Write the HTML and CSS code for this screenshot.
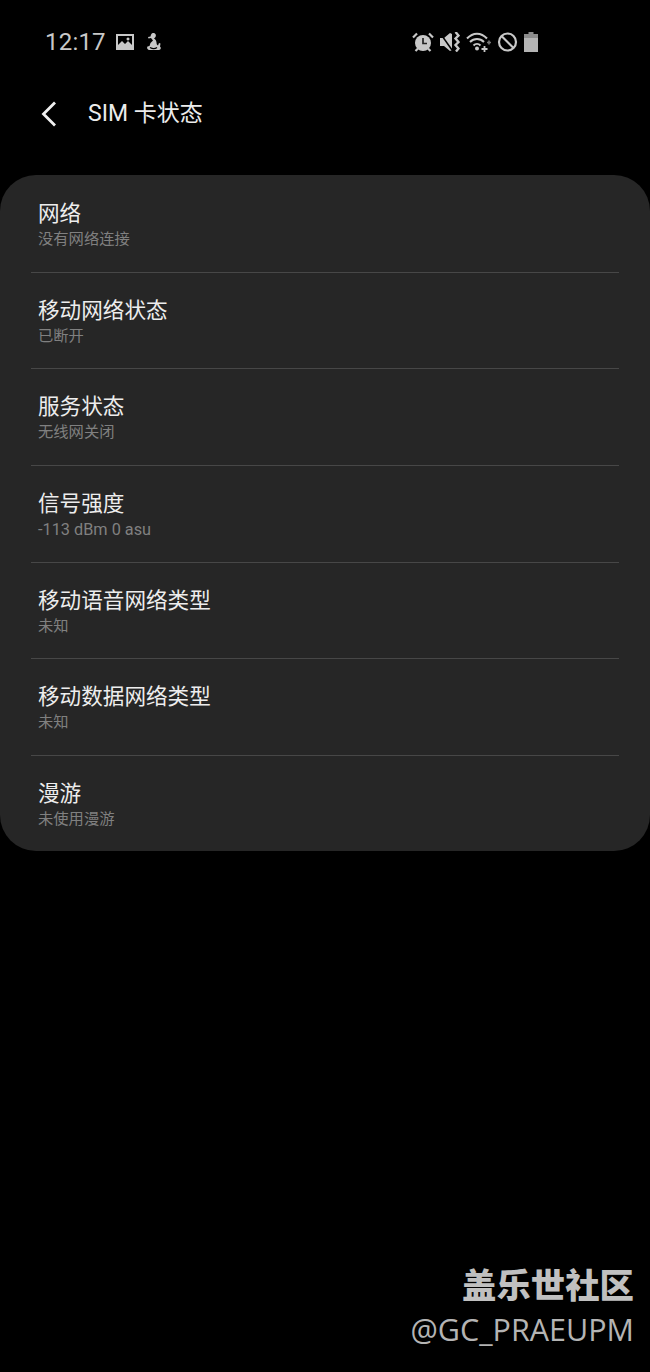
FILE: index.html
```html
<!DOCTYPE html>
<html lang="zh">
<head>
<meta charset="utf-8">
<title>SIM 卡状态</title>
<link rel="stylesheet" href="styles.css">
</head>
<body>
<div class="status">
  <div class="status-left">
    <span class="time">12:17</span>
    <svg class="ic-img" width="20" height="18" viewBox="0 0 20 18"><path fill="#c8c8c8" fill-rule="evenodd" d="M1 1h18v16H1zM3 3v9l4-4 3 3 3-3 4 4V3zM13 4.500a1.500 1.500 0 1 0 .01 0z"/></svg>
    <svg class="ic-s" width="18" height="20" viewBox="0 0 18 20"><path fill="#c8c8c8" d="M8 1c2.500 0 3.500 2 2.500 4L9 6.500c1.500 1 2.500 2.500 2.500 4 0 1.500.5 2.500 1.500 3l1-2.500 1.500.5-.5 3c1.500 1 1 3-1 3.500H5c-2.500 0-3.500-2-2.500-3.500l2-.5 1-3L8 8.500 6 6l-2.500.5L3 5l2.500-.5C6 2.500 6.500 1 8 1z"/><path d="M5 15.500c2.500 1.500 5 1.500 7 0" fill="none" stroke="#000" stroke-width="1.300"/></svg>
  </div>
  <div class="status-right">
    <svg width="22" height="20" viewBox="0 0 22 20"><circle cx="11" cy="11" r="8" fill="#c8c8c8"/><path d="M11 6v5.500h4" fill="none" stroke="#222" stroke-width="1.700"/><path d="M1 5.500 5 1.500M21 5.500 17 1.500M3.500 19l2.500-2.500M18.500 19 16 16.500" stroke="#c8c8c8" stroke-width="2.200"/></svg>
    <svg width="20" height="20" viewBox="0 0 20 20"><path fill="#c8c8c8" d="M0 6h4l6-5 2 1v16l-2 1-6-5H0z"/><path d="M0 1l12 17" stroke="#000" stroke-width="1.500"/><path d="M15.500 0l3 3.500-3 3 3 3.500-3 3 3 3.500-2.500 3" fill="none" stroke="#c8c8c8" stroke-width="2.400"/></svg>
    <svg width="25" height="20" viewBox="0 0 25 20"><g fill="none" stroke="#c8c8c8" stroke-width="2"><path d="M1 6.500c6-6.500 14-6.500 20 0"/><path d="M4 10c4-4 10-4 14 0"/><path d="M7.500 13.500c2-2 5-2 7 0"/></g><circle cx="11" cy="16.500" r="2" fill="#c8c8c8"/><path d="M15.500 17h6M18.500 14v6" stroke="#c8c8c8" stroke-width="1.800"/><path d="M21 10.500h4M23 8.500v4" stroke="#777" stroke-width="1.600"/></svg>
    <svg width="21" height="20" viewBox="0 0 21 20"><circle cx="10.500" cy="10" r="8.500" fill="none" stroke="#c8c8c8" stroke-width="2.200"/><path d="M4.500 4l12 12" stroke="#c8c8c8" stroke-width="2.200"/></svg>
    <svg width="14" height="20" viewBox="0 0 14 20"><path fill="#8c8c8c" d="M4.500 0h5v2H14v5H0V2h4.500z"/><path fill="#b4b4b4" d="M0 6h14v14H0z"/></svg>
  </div>
</div>
<header class="bar">
  <svg class="back" width="16" height="26" viewBox="0 0 16 26"><path d="M14 1.500 2.500 13 14 24.500" fill="none" stroke="#f0f0f0" stroke-width="2.800"/></svg>
  <h1 class="title">SIM 卡状态</h1>
</header>
<main class="card">
  <div class="row"><div class="label">网络</div><div class="sub">没有网络连接</div></div>
  <div class="row"><div class="label">移动网络状态</div><div class="sub">已断开</div></div>
  <div class="row"><div class="label">服务状态</div><div class="sub">无线网关闭</div></div>
  <div class="row"><div class="label">信号强度</div><div class="sub sub-latin">-113 dBm 0 asu</div></div>
  <div class="row"><div class="label">移动语音网络类型</div><div class="sub">未知</div></div>
  <div class="row"><div class="label">移动数据网络类型</div><div class="sub">未知</div></div>
  <div class="row"><div class="label">漫游</div><div class="sub">未使用漫游</div></div>
</main>
<footer class="mark">
  <div class="mark-cn">盖乐世社区</div>
  <div class="mark-en">@GC_PRAEUPM</div>
</footer>
</body>
</html>
```
FILE: styles.css
```css
html, body {
  margin: 0;
  padding: 0;
  background: #000;
}
body {
  width: 650px;
  height: 1372px;
  position: relative;
  overflow: hidden;
  font-family: Roboto, "Noto Sans CJK SC", sans-serif;
}
.status {
  display: flex;
  justify-content: space-between;
  align-items: center;
  height: 20px;
  padding: 32px 112px 0 45px;
}
.status-left, .status-right {
  display: flex;
  align-items: center;
}
.status-left { gap: 9px; }
.status-right { gap: 6px; }
.time {
  font-size: 24px;
  color: #c8c8c8;
  letter-spacing: 0.2px;
  line-height: 20px;
}
.ic-s { margin-left: 1px; }
.bar {
  display: flex;
  align-items: center;
  height: 36px;
  margin-top: 44px;
  padding-left: 41px;
}
.back { margin-right: 31px; }
.title {
  margin: 0;
  font-size: 23px;
  font-weight: 400;
  color: #ececec;
  line-height: 36px;
}
.card {
  margin-top: 43px;
  height: 676px;
  background: #262626;
  border-radius: 36px;
  padding: 1px 31px 0;
  box-sizing: border-box;
}
.row {
  height: 96.700px;
  box-sizing: border-box;
  padding: 23px 0 0 7px;
  border-bottom: 1px solid #474747;
}
.row:last-child { border-bottom: 0; }
.label {
  font-size: 21.600px;
  line-height: 30px;
  color: #ededed;
}
.sub {
  font-size: 15.300px;
  line-height: 20px;
  color: #808080;
}
.sub-latin {
  font-size: 16.300px;
  line-height: 22px;
}
.mark {
  position: absolute;
  right: 16px;
  top: 1264px;
  text-align: right;
  color: #c0c0c0;
}
.mark-cn {
  font-size: 34.400px;
  font-weight: 900;
  line-height: 44px;
}
.mark-en {
  font-family: "Open Sans", sans-serif;
  font-size: 30.500px;
  line-height: 42px;
  color: #b4b4b4;
}
```
